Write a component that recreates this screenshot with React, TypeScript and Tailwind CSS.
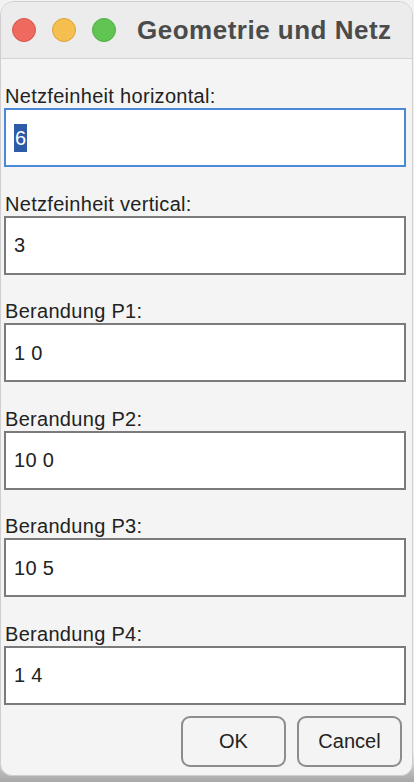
const fields = [
  { label: "Netzfeinheit horizontal:", value: "6", focused: true },
  { label: "Netzfeinheit vertical:", value: "3" },
  { label: "Berandung P1:", value: "1 0" },
  { label: "Berandung P2:", value: "10 0" },
  { label: "Berandung P3:", value: "10 5" },
  { label: "Berandung P4:", value: "1 4" },
];

const font = { fontFamily: '"Liberation Sans", Arial, sans-serif' };

const App = () => {
  return (
    <div
      style={font}
      className="flex h-[782px] w-[414px] flex-col bg-[linear-gradient(to_bottom,#f2f2f2_96%,#b5b5b5_99%,#a8a8a8)] pt-[1px]"
    >
      <div className="flex h-[775px] w-[413px] flex-col overflow-hidden rounded-t-[14px] rounded-b-[12px] border border-[#cfcfcf] bg-[#f4f4f4]">
        {/* Title bar */}
        <div className="flex h-[57px] shrink-0 items-center border-b border-[#d4d4d4] bg-[#ececec] pl-[11px]">
          <div className="flex items-center gap-[16px]">
            <span className="h-[24px] w-[24px] rounded-full border border-[#d9574c] bg-[#ee6a5f]" />
            <span className="h-[24px] w-[24px] rounded-full border border-[#dca43a] bg-[#f5bf4f]" />
            <span className="h-[24px] w-[24px] rounded-full border border-[#4fae43] bg-[#61c554]" />
          </div>
          <h1 className="ml-[21px] text-[26px] font-bold tracking-[0.5px] text-[#4b4b4b]">
            Geometrie und Netz
          </h1>
        </div>

        {/* Form */}
        <div className="flex flex-1 flex-col pt-[25px] pl-[3px] pr-[6px]">
          <div className="flex flex-col gap-[24.5px]">
            {fields.map((f) => (
              <div key={f.label} className="flex flex-col">
                <label className="pl-[1px] text-[20px] leading-[24px] tracking-[0.3px] text-[#222222]">
                  {f.label}
                </label>
                <div
                  className={`flex h-[59px] items-center border-2 bg-white pl-[8px] text-[20px] text-[#222222] ${
                    f.focused ? "border-[#4a89d6]" : "border-[#7b7b7b]"
                  }`}
                >
                  {f.focused ? (
                    <span className="bg-[#2d5ba8] px-[1px] leading-[28px] text-white">
                      {f.value}
                    </span>
                  ) : (
                    <span className="tracking-[0.3px]">{f.value}</span>
                  )}
                </div>
              </div>
            ))}
          </div>

          {/* Buttons */}
          <div className="mt-[11px] flex justify-end gap-[11px] pr-[4px]">
            <button className="h-[51px] w-[105px] rounded-[9px] border-2 border-[#8c8c8c] bg-[#f4f4f4] text-[20px] text-[#222222]">
              OK
            </button>
            <button className="h-[51px] w-[105px] rounded-[9px] border-2 border-[#8c8c8c] bg-[#f4f4f4] text-[20px] text-[#222222]">
              Cancel
            </button>
          </div>
        </div>
      </div>
    </div>
  );
};

export default App;
